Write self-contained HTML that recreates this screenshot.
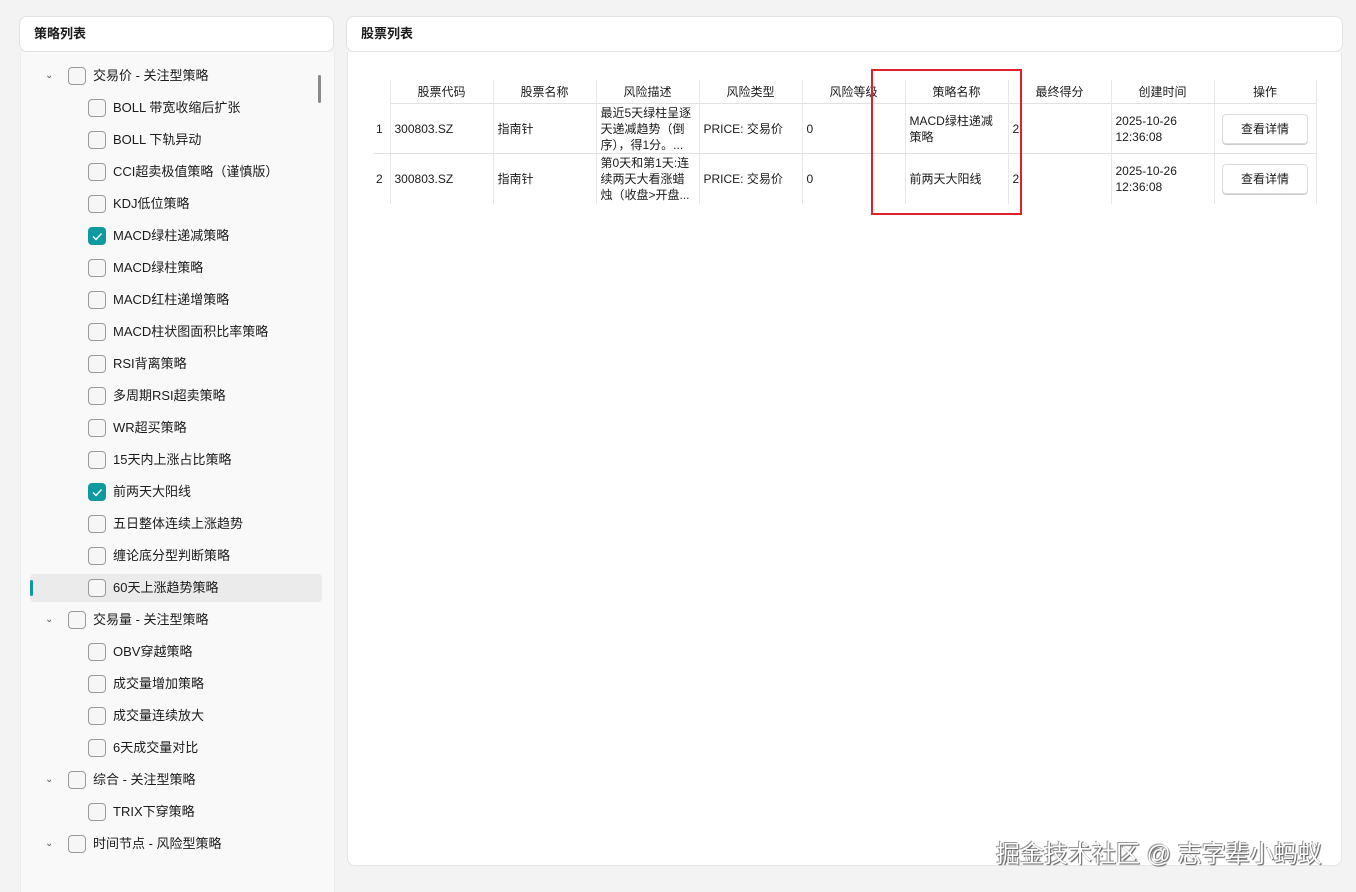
<!DOCTYPE html>
<html><head><meta charset="utf-8"><style>
body{margin:0;width:1356px;height:889px;background:#f3f3f3;font-family:"Liberation Sans","Noto Sans CJK SC",sans-serif;font-size:13px;color:#1b1b1b;position:relative;overflow:hidden}
.card{position:absolute;background:#fff;border:1px solid #e2e2e2;border-radius:8px;box-sizing:border-box}
.title{font-weight:bold;font-size:13px;padding:0 14px;line-height:34px}
.lb{position:absolute;left:20px;top:52px;width:313px;height:840px;background:#f9f9f9;border-left:1px solid #ececec;border-right:1px solid #ececec}
.row{position:absolute;height:28px;line-height:28px;white-space:nowrap}
.cb{position:absolute;width:18px;height:18px;border:1px solid #9a9a9a;border-radius:4px;background:#f6f6f6;box-sizing:border-box;top:5px}
.cb.on{background:#0f9aa0;border-color:#0f9aa0}
.chev{position:absolute;left:45px;top:0;font-size:10px;color:#555}
.rb{position:absolute;left:347px;top:52px;width:995px;height:814px;background:#fff;border:1px solid #e6e6e6;border-top:none;border-radius:0 0 8px 8px;box-sizing:border-box}
table{position:absolute;left:374px;top:80px;border-collapse:collapse;font-size:12px;table-layout:fixed}
th{font-weight:normal;height:23px;padding:0;border-right:1px solid #e8e8e8;text-align:center}
tr.d{height:50px}
td{height:49px;border-top:1px solid #e2e2e2;border-right:1px solid #e8e8e8;padding:0 4px;line-height:16px;vertical-align:middle;overflow:hidden;white-space:nowrap;box-sizing:border-box}
td.w{white-space:normal}
.btn{display:inline-block;width:84px;height:28px;border:1px solid #dcdcdc;border-radius:4px;text-align:center;line-height:28px;box-shadow:0 1px 0 #ccc}
</style></head><body>
<div class="card" style="left:19px;top:16px;width:315px;height:36px"><div class="title">策略列表</div></div>
<div class="card" style="left:346px;top:16px;width:997px;height:36px"><div class="title">股票列表</div></div>
<div class="lb"></div>
<div style="position:absolute;left:318px;top:75px;width:3px;height:28px;background:#8a8a8a;border-radius:2px"></div>
<div style="position:absolute;left:30px;top:574px;width:292px;height:28px;background:#ebebeb;border-radius:4px"></div>
<div style="position:absolute;left:30px;top:580px;width:3px;height:16px;background:#0f9aa0;border-radius:2px"></div>
<div id="tree"></div>
<div class="rb"></div>
<table>
<colgroup><col style="width:16px"><col style="width:103px"><col style="width:103px"><col style="width:103px"><col style="width:103px"><col style="width:103px"><col style="width:103px"><col style="width:103px"><col style="width:103px"><col style="width:102px"></colgroup>
<tr><th></th><th>股票代码</th><th>股票名称</th><th>风险描述</th><th>风险类型</th><th>风险等级</th><th>策略名称</th><th>最终得分</th><th>创建时间</th><th>操作</th></tr>
<tr class="d"><td style="padding:0 2px;border-top-color:#fff">1</td><td>300803.SZ</td><td>指南针</td><td class="w">最近5天绿柱呈逐天递减趋势（倒序），得1分。...</td><td>PRICE: 交易价</td><td>0</td><td class="w">MACD绿柱递减策略</td><td>2</td><td>2025-10-26<br>12:36:08</td><td style="text-align:center"><span class="btn">查看详情</span></td></tr>
<tr class="d"><td style="padding:0 2px">2</td><td>300803.SZ</td><td>指南针</td><td class="w">第0天和第1天:连续两天大看涨蜡烛（收盘&gt;开盘...</td><td>PRICE: 交易价</td><td>0</td><td>前两天大阳线</td><td>2</td><td>2025-10-26<br>12:36:08</td><td style="text-align:center"><span class="btn">查看详情</span></td></tr>
</table>
<div style="position:absolute;left:871px;top:69px;width:151px;height:146px;border:2px solid #e0202c;box-sizing:border-box"></div>
<div style="position:absolute;left:996px;top:834px;font-size:24px;color:#fff;text-shadow:1px 1px 1px #555,-1px -1px 0 #999;letter-spacing:0px">掘金技术社区 @ 志字辈小蚂蚁</div>
<script>
var items=[[0,"交易价 - 关注型策略"],[1,"BOLL 带宽收缩后扩张"],[1,"BOLL 下轨异动"],[1,"CCI超卖极值策略（谨慎版）"],[1,"KDJ低位策略"],[2,"MACD绿柱递减策略"],[1,"MACD绿柱策略"],[1,"MACD红柱递增策略"],[1,"MACD柱状图面积比率策略"],[1,"RSI背离策略"],[1,"多周期RSI超卖策略"],[1,"WR超买策略"],[1,"15天内上涨占比策略"],[2,"前两天大阳线"],[1,"五日整体连续上涨趋势"],[1,"缠论底分型判断策略"],[1,"60天上涨趋势策略"],[0,"交易量 - 关注型策略"],[1,"OBV穿越策略"],[1,"成交量增加策略"],[1,"成交量连续放大"],[1,"6天成交量对比"],[0,"综合 - 关注型策略"],[1,"TRIX下穿策略"],[0,"时间节点 - 风险型策略"]];
var h="";items.forEach(function(it,i){var y=62+i*32;var g=it[0]==0;var cx=g?68:88;
h+='<div class="row" style="left:0;top:'+y+'px;width:330px">'+(g?'<span class="chev">&#8964;</span>':'')+'<div class="cb'+(it[0]==2?' on':'')+'" style="left:'+cx+'px">'+(it[0]==2?'<svg width="16" height="16" style="position:absolute;left:0;top:0"><path d="M4 8.5l3 3 5.5-6" stroke="#fff" stroke-width="1.3" fill="none"/></svg>':'')+'</div><span style="position:absolute;left:'+(cx+25)+'px">'+it[1]+'</span></div>';});
document.getElementById("tree").innerHTML=h;
</script>
</body></html>
